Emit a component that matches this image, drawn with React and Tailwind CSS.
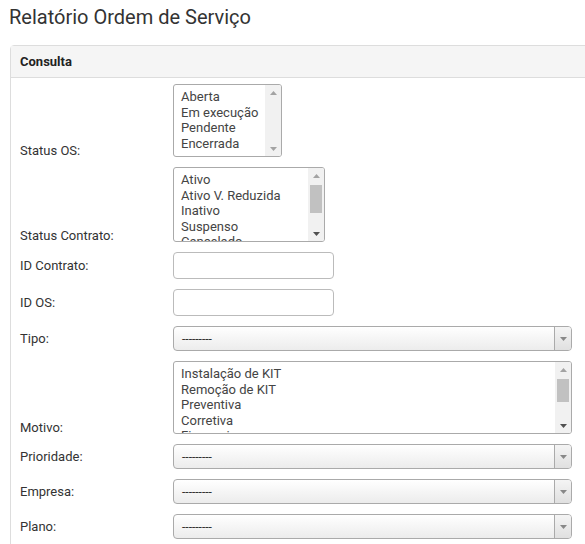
import React from "react";

const statusOS = ["Aberta", "Em execução", "Pendente", "Encerrada"];
const statusContrato = ["Ativo", "Ativo V. Reduzida", "Inativo", "Suspenso", "Cancelado"];
const motivos = ["Instalação de KIT", "Remoção de KIT", "Preventiva", "Corretiva", "Financeiro"];

function Seta({ dir = "down", cor = "#a3a3a3" }) {
  return (
    <svg width="7" height="4" viewBox="0 0 7 4">
      {dir === "up" ? (
        <polygon points="0,4 7,4 3.5,0" fill={cor} />
      ) : (
        <polygon points="0,0 7,0 3.5,4" fill={cor} />
      )}
    </svg>
  );
}

function ListBox({ itens, largura, altura, thumb }) {
  return (
    <div
      className={`flex rounded-[3px] border border-[#aaa] bg-white overflow-hidden ${largura} ${altura}`}
    >
      <div className="flex-1 overflow-hidden pl-[7px] pt-[4px] text-[13px] leading-[15.6px] text-[#444]">
        {itens.map((item) => (
          <div key={item} className="whitespace-nowrap">
            {item}
          </div>
        ))}
      </div>
      <div className="w-[16px] flex flex-col items-center bg-[#f1f1f1]">
        <div className="h-[15px] flex items-center justify-center">
          <Seta dir="up" cor="#a3a3a3" />
        </div>
        <div className="flex-1 w-full px-[2px]">
          {thumb && <div className={`w-full bg-[#c1c1c1] ${thumb}`} />}
        </div>
        <div className="h-[15px] flex items-center justify-center">
          <Seta dir="down" cor={thumb ? "#505050" : "#a3a3a3"} />
        </div>
      </div>
    </div>
  );
}

function Select() {
  return (
    <div className="flex h-[25px] w-[399px] rounded-[4px] border border-[#aaa] bg-gradient-to-b from-white to-[#ececec] overflow-hidden">
      <div className="flex-1 flex items-center pl-[8px] text-[12px] text-[#333]">
        ---------
      </div>
      <div className="w-[17px] flex items-center justify-center border-l border-[#aaa] bg-gradient-to-b from-[#f4f4f4] to-[#e0e0e0]">
        <Seta dir="down" cor="#888" />
      </div>
    </div>
  );
}

function Input() {
  return <input className="h-[27px] w-[161px] rounded-[4px] border border-[#bbb] bg-white" />;
}

function Linha({ label, children, fim }) {
  return (
    <div className={`flex ${fim ? "items-end" : "items-center"}`}>
      <label className="w-[153px] shrink-0 text-[13px] leading-[12px] text-[#333]">{label}</label>
      {children}
    </div>
  );
}

export default function App() {
  return (
    <div
      className="w-[585px] h-[544px] overflow-hidden bg-white"
      style={{ fontFamily: "Roboto, 'Liberation Sans', sans-serif" }}
    >
      <h1 className="pl-[9px] pt-[3px] h-[45px] text-[20px] font-normal leading-[28px] text-[#333]">
        Relatório Ordem de Serviço
      </h1>

      <div className="ml-[10px] w-[600px] border border-[#ddd] rounded-tl-[4px]">
        <div className="h-[32px] flex items-center pl-[9px] bg-[#f5f5f5] border-b border-[#ddd] text-[13px] font-bold text-[#222]">
          Consulta
        </div>

        <div className="pl-[9px] pt-[6px] pb-[20px] flex flex-col gap-[10px]">
          <Linha label="Status OS:" fim>
            <ListBox itens={statusOS} largura="w-[109px]" altura="h-[73px]" />
          </Linha>
          <Linha label="Status Contrato:" fim>
            <ListBox
              itens={statusContrato}
              largura="w-[152px]"
              altura="h-[75px]"
              thumb="h-[28px] mt-[2px]"
            />
          </Linha>
          <Linha label="ID Contrato:">
            <Input />
          </Linha>
          <Linha label="ID OS:">
            <Input />
          </Linha>
          <Linha label="Tipo:">
            <Select />
          </Linha>
          <Linha label="Motivo:" fim>
            <ListBox
              itens={motivos}
              largura="w-[399px]"
              altura="h-[73px]"
              thumb="h-[23px] mt-[2px]"
            />
          </Linha>
          <Linha label="Prioridade:">
            <Select />
          </Linha>
          <Linha label="Empresa:">
            <Select />
          </Linha>
          <Linha label="Plano:">
            <Select />
          </Linha>
        </div>
      </div>
    </div>
  );
}
